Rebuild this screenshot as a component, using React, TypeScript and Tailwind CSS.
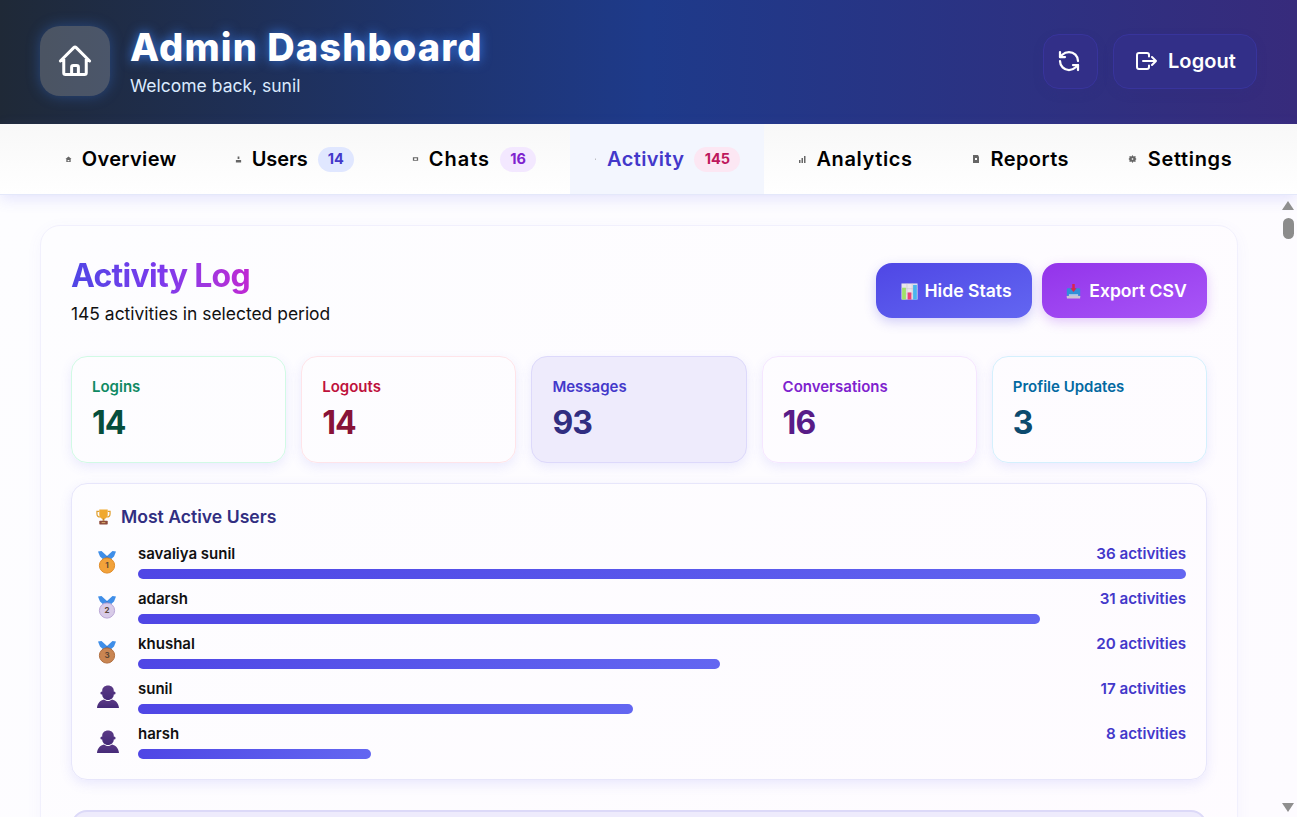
import type { ReactNode } from 'react';
import { RefreshCcw } from 'lucide-react';

const HEAD = 'font-["Inter","Noto_Sans",sans-serif]';

function HomeIcon() {
  return (
    <svg viewBox="0 0 24 24" fill="none" stroke="currentColor" strokeWidth={2} strokeLinecap="round" strokeLinejoin="round" className="w-9 h-9 text-white">
      <path d="m2.25 12 8.954-8.955c.44-.439 1.152-.439 1.591 0L21.75 12M4.5 9.75v10.125c0 .621.504 1.125 1.125 1.125H9.75v-4.875c0-.621.504-1.125 1.125-1.125h2.25c.621 0 1.125.504 1.125 1.125V21h4.125c.621 0 1.125-.504 1.125-1.125V9.75M8.25 21h8.250" />
    </svg>
  );
}

function LogoutIcon() {
  return (
    <svg viewBox="0 0 21 18" fill="none" stroke="currentColor" strokeWidth={2} strokeLinecap="round" strokeLinejoin="round" className="w-[21px] h-[18px] text-white">
      <path d="M13 4.500V3a2 2 0 0 0-2-2H3a2 2 0 0 0-2 2v12a2 2 0 0 0 2 2h8a2 2 0 0 0 2-2v-1.500" />
      <path d="M7 9h13M16 5l4 4-4 4" />
    </svg>
  );
}

function Medal({ fill, edge, label }: { fill: string; edge: string; label: string }) {
  return (
    <svg viewBox="0 0 20 24" className="w-5 h-6">
      <path d="M1 1.500 4.500 1 10 6l5.500-5 3.500.5-2 5L12 11H8L3 6.500z" fill="#3f8ee8" />
      <path d="M8 8 10 6l2 2-2 2z" fill="#2f6fc4" />
      <circle cx="10" cy="15.500" r="7.600" fill={fill} stroke={edge} strokeWidth="1" />
      <text x="10" y="18.400" textAnchor="middle" fontSize="8" fontWeight="700" fontFamily="Inter, sans-serif" fill="#5b4636">
        {label}
      </text>
    </svg>
  );
}

function Person() {
  return (
    <svg viewBox="0 0 22 24" className="w-[22px] h-6">
      <defs>
        <linearGradient id="person" x1="0" y1="0" x2="0" y2="1">
          <stop offset="0" stopColor="#5b3a86" />
          <stop offset="1" stopColor="#452a78" />
        </linearGradient>
      </defs>
      <circle cx="5" cy="8" r="1.600" fill="#4f3280" />
      <circle cx="17" cy="8" r="1.600" fill="#4f3280" />
      <path d="M5.200 5.800C5.200 2.600 7.700.5 11 .5s5.800 2.100 5.800 5.300v3.700c0 3-2.600 5.500-5.800 5.500s-5.800-2.500-5.800-5.500z" fill="url(#person)" />
      <path d="M0 23c.4-4.800 3.200-7.500 7-8.500 1 .9 2.500 1.500 4 1.500s3-.6 4-1.500c3.800 1 6.600 3.700 7 8.500z" fill="url(#person)" />
    </svg>
  );
}

function Trophy() {
  return (
    <svg viewBox="0 0 16 18" className="w-[15px] h-[18px]">
      <path d="M3.500 3H1v2.500C1 7.500 2.500 9 4.500 9M12.500 3H15v2.500C15 7.500 13.500 9 11.500 9" fill="none" stroke="#e0a030" strokeWidth="1.300" />
      <path d="M3.500 1h9v5.500c0 2.600-2 4.500-4.500 4.500S3.500 9.100 3.500 6.500z" fill="#f0a92e" />
      <rect x="7" y="10.500" width="2" height="2.500" fill="#c98a22" />
      <rect x="3.500" y="13" width="9" height="4" rx=".7" fill="#8c4a3a" />
      <rect x="6" y="14.500" width="4" height="1" fill="#e0b070" />
    </svg>
  );
}

function ChartEmoji() {
  return (
    <svg viewBox="0 0 18 18" className="w-[17px] h-[17px]">
      <rect x="0.500" y="0.500" width="17" height="17" fill="#e9e6ec" />
      <path d="M6.300.5v17M11.900.5v17M.5 6h17M.5 11.500h17" stroke="#c9c5cf" strokeWidth=".6" />
      <rect x="1.200" y="5" width="4" height="12.500" fill="#9fe06a" />
      <rect x="7" y="10" width="4" height="7.500" fill="#ec3f7a" />
      <rect x="12.800" y="2" width="4" height="15.500" fill="#4ab4ee" />
    </svg>
  );
}

function InboxEmoji() {
  return (
    <svg viewBox="0 0 18 18" className="w-[15px] h-[17px]">
      <rect x="1" y="14" width="16" height="3.500" rx=".8" fill="#c9c4d2" />
      <path d="M1 6.500c0-.8.600-1.400 1.400-1.400h13.200c.8 0 1.400.6 1.400 1.400V14H1z" fill="#2f8fd8" />
      <path d="M3.500 12.500h11V14h-11z" fill="#e8e4ee" />
      <path d="M7.500 0h3v5h2.200L9 9.500 5.300 5h2.200z" fill="#d8264f" />
    </svg>
  );
}

function Tab({ icon, label, spacing, badge, badgeCls, active }: { icon: ReactNode; label: string; spacing: string; badge?: number; badgeCls?: string; active?: boolean }) {
  return (
    <div className={`flex items-center h-full px-6 ${active ? 'bg-[#f3f6fe]' : ''}`}>
      {icon}
      <span className={`${HEAD} ml-[10px] text-[20px] leading-none font-semibold ${spacing} ${active ? 'text-[#4338ca]' : 'text-black'}`}>{label}</span>
      {badge !== undefined && (
        <span className={`ml-[10px] h-[25px] rounded-full flex items-center justify-center ${HEAD} text-[14.500px] font-bold ${badgeCls}`}>{badge}</span>
      )}
    </div>
  );
}

function Mini({ path, w = 7 }: { path: string; w?: number }) {
  return (
    <svg viewBox="0 0 8 8" style={{ width: w, height: 8 }} className="shrink-0">
      <path d={path} fill="#666" />
    </svg>
  );
}

const stats = [
  { label: 'Logins', value: 14, box: 'border-[#d1fae5]', lab: 'text-[#0f8a63]', val: 'text-[#064e3b]' },
  { label: 'Logouts', value: 14, box: 'border-[#ffe4e9]', lab: 'text-[#be123c]', val: 'text-[#881337]' },
  { label: 'Messages', value: 93, box: 'border-[#ddd9fb] bg-[#eeebfc]', lab: 'text-[#4338ca]', val: 'text-[#312e81]' },
  { label: 'Conversations', value: 16, box: 'border-[#f5e6ff]', lab: 'text-[#7e22ce]', val: 'text-[#581c87]' },
  { label: 'Profile Updates', value: 3, box: 'border-[#d4f0fd]', lab: 'text-[#0369a1]', val: 'text-[#0c4a6e]' },
];

const users = [
  { name: 'savaliya sunil', count: 36, pct: 100, icon: <Medal fill="#f2a23a" edge="#e08a24" label="1" /> },
  { name: 'adarsh', count: 31, pct: 86.100, icon: <Medal fill="#d8cbe8" edge="#b9a6d6" label="2" /> },
  { name: 'khushal', count: 20, pct: 55.550, icon: <Medal fill="#c98552" edge="#b06c3c" label="3" /> },
  { name: 'sunil', count: 17, pct: 47.220, icon: <Person /> },
  { name: 'harsh', count: 8, pct: 22.220, icon: <Person /> },
];

export default function App() {
  return (
    <div className="h-screen overflow-hidden flex flex-col relative bg-[#fdfcff] font-['Inter',sans-serif]">
      {/* top bar */}
      <header className="h-[124px] shrink-0 flex items-center justify-between pl-10 pr-10 pb-[2px] bg-[linear-gradient(90deg,#1f2937_0%,#1e3a8a_50%,#372b7c_100%)]">
        <div className="flex items-center gap-5">
          <div className="w-[70px] h-[70px] rounded-[20px] bg-white/20 flex items-center justify-center shadow-[0_0_14px_rgba(59,130,246,0.35)]">
            <HomeIcon />
          </div>
          <div className="pt-[2px]">
            <h1 className={`${HEAD} text-[38px] leading-[42px] font-extrabold text-white tracking-[1.1px] [text-shadow:0_0_12px_rgba(59,130,246,0.9)]`}>Admin Dashboard</h1>
            <p className="mt-[6px] text-[17.500px] leading-[24px] text-[#dbeafe]">Welcome back, sunil</p>
          </div>
        </div>
        <div className="flex items-center gap-[15px]">
          <button className="w-[55px] h-[55px] pr-1 rounded-2xl bg-[#322f88] border border-[#38349c] flex items-center justify-center shadow-[0_4px_10px_rgba(49,46,129,0.3)]">
            <RefreshCcw className="w-6 h-6 text-white" strokeWidth={2.25} />
          </button>
          <button className="w-[144px] h-[55px] pl-[2px] rounded-2xl bg-[#322f88] border border-[#38349c] flex items-center justify-center gap-[11px] text-white text-[20px] font-semibold shadow-[0_4px_10px_rgba(49,46,129,0.3)]">
            <LogoutIcon />
            <span className={`${HEAD} tracking-[0.1px]`}>Logout</span>
          </button>
        </div>
      </header>

      {/* tabs */}
      <nav className="h-[71px] shrink-0 flex justify-center gap-[10px] bg-gradient-to-b from-[#f8f8f8] to-white border-b border-[#e4e8fa] shadow-[0_4px_14px_rgba(99,102,241,0.16)] relative z-10">
        <Tab label="Overview" spacing="tracking-[0.37px]" icon={<Mini path="M4 1 7.500 4 6.500 4v3.500h-5V4L.5 4zM3 5v1.500h2V5z" />} />
        <Tab label="Users" spacing="tracking-[-0.1px]" badge={14} badgeCls="w-9 bg-[#e0e7ff] text-[#4338ca]" icon={<Mini path="M3 1h2v3H3zM1 5h6v3H1z" />} />
        <Tab label="Chats" spacing="tracking-[1px]" badge={16} badgeCls="w-9 bg-[#f3e8ff] text-[#7e22ce]" icon={<Mini path="M1 2h6v4H1zM2.500 3v2h3V3z" />} />
        <Tab label="Activity" active spacing="tracking-[0.37px]" badge={145} badgeCls="w-[46px] bg-[#fce7f3] text-[#be185d]" icon={<Mini w={3} path="M3 3h2v2H3z" />} />
        <Tab label="Analytics" spacing="tracking-[0.6px]" icon={<Mini w={8} path="M1 5h1.500v3H1zM3.500 3H5v5H3.500zM6 1h1.500v7H6z" />} />
        <Tab label="Reports" spacing="tracking-[0.4px]" icon={<Mini w={10} path="M1 0h5l1 2v6H1zM3 3v2h2V3z" />} />
        <Tab label="Settings" spacing="tracking-[0.65px]" icon={<Mini w={11} path="M4 0l1 1.500L7 1v2L8 4 7 5v2L5 6.500 4 8 3 6.500 1 7V5L0 4l1-1V1l2 .5zM3.300 3.300v1.400h1.400V3.300z" />} />
      </nav>

      {/* main content */}
      <main className="flex-1 min-h-0 overflow-hidden pt-[30px] pl-10 pr-[59px] bg-[linear-gradient(135deg,#fdfdff,#fdfbff)]">
        <section className="rounded-[20px] border border-[#f1f0fd] bg-[linear-gradient(135deg,#fdfdff,#fefbff)] p-[30px] shadow-[0_4px_16px_rgba(99,102,241,0.05)]">
          <div className="flex items-start justify-between h-[100px]">
            <div>
              <h2 className={`${HEAD} text-[32px] leading-[40px] font-bold tracking-[-0.7px] w-fit bg-gradient-to-r from-[#4f46e5] via-[#7c3aed] to-[#c026d3] bg-clip-text text-transparent`}>Activity Log</h2>
              <p className="mt-[6px] text-[17.450px] leading-[24px] text-[#111111]">145 activities in selected period</p>
            </div>
            <div className="flex gap-[10px] pt-[7px]">
              <button className="w-[156px] h-[55px] pl-[5px] pt-[2px] rounded-2xl bg-gradient-to-br from-[#4f46e5] to-[#6366f1] text-white font-semibold text-[17.600px] flex items-center justify-center gap-[6px] shadow-[0_4px_12px_rgba(79,70,229,0.25)]">
                <ChartEmoji />
                Hide Stats
              </button>
              <button className="w-[165px] h-[55px] pl-1 pt-[2px] rounded-2xl bg-gradient-to-br from-[#9333ea] to-[#a855f7] text-white font-semibold text-[17.600px] flex items-center justify-center gap-2 shadow-[0_4px_12px_rgba(147,51,234,0.25)]">
                <InboxEmoji />
                Export CSV
              </button>
            </div>
          </div>

          <div className="grid grid-cols-5 gap-[15px]">
            {stats.map((s) => (
              <div key={s.label} className={`h-[107px] rounded-2xl border px-5 pt-[21px] shadow-[0_4px_12px_rgba(99,102,241,0.12)] ${s.box}`}>
                <div className={`text-[15px] leading-[18px] font-semibold ${s.lab}`}>{s.label}</div>
                <div className={`mt-[7px] text-[32px] leading-[40px] font-bold tracking-[-1px] ${s.val}`}>{s.value}</div>
              </div>
            ))}
          </div>

          <div className="mt-5 h-[297px] rounded-2xl border border-[#e7e6fb] pl-[21px] pr-5 pt-[21px] shadow-[0_4px_12px_rgba(99,102,241,0.13)]">
            <div className="flex items-center gap-[10px] h-6 pl-[3px]">
              <Trophy />
              <span className="text-[17.600px] font-semibold text-[#312e81]">Most Active Users</span>
            </div>
            <div className="mt-[14px] flex flex-col gap-[9px]">
              {users.map((u) => (
                <div key={u.name} className="flex items-center h-9">
                  <div className="w-[45px] shrink-0 pl-1 pt-[2px]">{u.icon}</div>
                  <div className="flex-1">
                    <div className="flex justify-between items-center h-[22px] text-[15.200px] font-semibold">
                      <span className="text-[#111111] text-[15px]">{u.name}</span>
                      <span className="text-[#4338ca]">{u.count} activities</span>
                    </div>
                    <div className="mt-1 h-[10px]">
                      <div className="h-full rounded-full bg-gradient-to-r from-[#4f46e5] to-[#6366f1]" style={{ width: `${u.pct}%` }} />
                    </div>
                  </div>
                </div>
              ))}
            </div>
          </div>

          <div className="mt-[30px] h-[120px] rounded-2xl border-2 border-[#dcd9f8] bg-[#eeebfc]" />
        </section>
      </main>

      {/* scrollbar */}
      <div className="absolute top-[195px] right-[3px] bottom-0 w-3 z-20 flex flex-col items-center">
        <div className="mt-[6px] w-0 h-0 border-x-[6px] border-x-transparent border-b-[9px] border-b-[#8f8f8f]" />
        <div className="mt-[8px] w-[11px] h-[21px] rounded-full bg-[#8c8c8c]" />
        <div className="mt-auto mb-[5px] w-0 h-0 border-x-[6px] border-x-transparent border-t-[9px] border-t-[#8f8f8f]" />
      </div>
    </div>
  );
}
